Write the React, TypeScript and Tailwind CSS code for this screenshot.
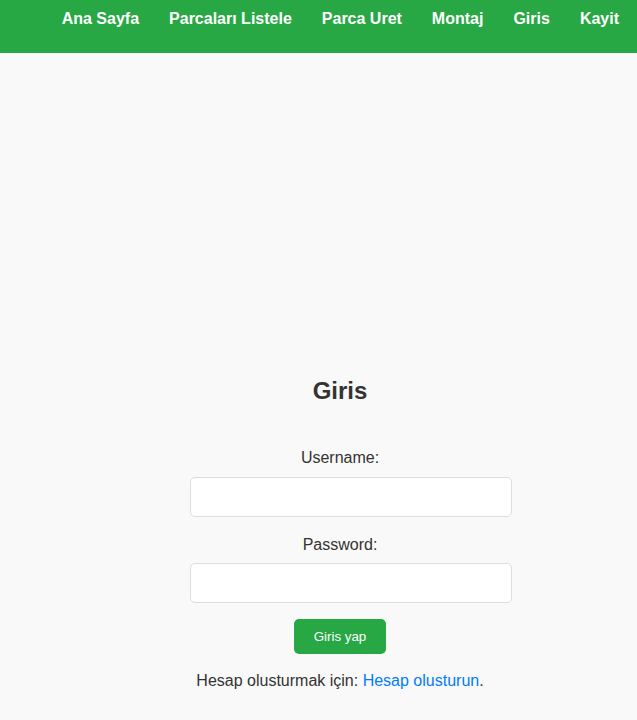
import React, { useState } from "react";

const navItems = ["Ana Sayfa", "Parcaları Listele", "Parca Uret", "Montaj", "Giris", "Kayit"];

function App() {
  const [username, setUsername] = useState("");
  const [password, setPassword] = useState("");

  return (
    <div className="min-h-screen bg-[#f9f9f9] font-['Liberation_Sans',Arial,sans-serif] text-[#333]">
      <header className="h-[53px] bg-[#28a745]">
        <nav className="flex justify-end gap-[30px] pr-[18px] pt-[10px]">
          {navItems.map((item) => (
            <a key={item} href="#" className="text-[16px] leading-[18px] font-bold text-white">
              {item}
            </a>
          ))}
        </nav>
      </header>

      <main className="flex justify-center pl-[43px] pt-[324px]">
        <div className="w-[300px] flex flex-col items-center">
          <h2 className="text-[24px] leading-[28px] font-bold">Giris</h2>

          <form className="w-full mt-[44px] flex flex-col items-center" onSubmit={(e) => e.preventDefault()}>
            <label className="text-[16px] leading-[18px]">Username:</label>
            <input
              type="text"
              value={username}
              onChange={(e) => setUsername(e.target.value)}
              className="box-content self-start w-[300px] h-[18px] mt-[10px] px-[10px] py-[10px] bg-white border border-[#ddd] rounded-[5px] outline-none"
            />

            <label className="text-[16px] leading-[18px] mt-[19px]">Password:</label>
            <input
              type="password"
              value={password}
              onChange={(e) => setPassword(e.target.value)}
              className="box-content self-start w-[300px] h-[18px] mt-[9px] px-[10px] py-[10px] bg-white border border-[#ddd] rounded-[5px] outline-none"
            />

            <button
              type="submit"
              className="mt-[16px] w-[92px] h-[35px] bg-[#28a745] text-white text-[13.333px] rounded-[5px]"
            >
              Giris yap
            </button>
          </form>

          <p className="mt-[18px] text-[16px] leading-[18px] whitespace-nowrap">
            Hesap olusturmak için:{" "}
            <a href="#" className="text-[#007bff]">
              Hesap olusturun
            </a>
            .
          </p>
        </div>
      </main>
    </div>
  );
}

export default App;
